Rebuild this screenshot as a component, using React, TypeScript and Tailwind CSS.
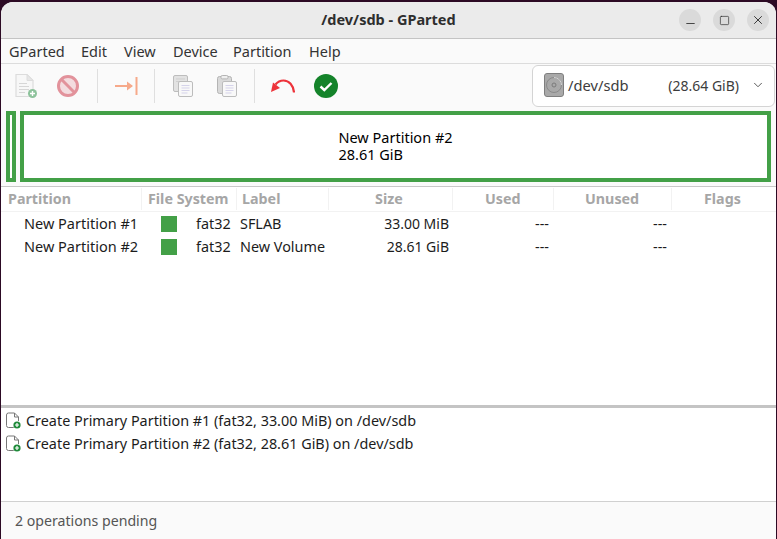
import { ChevronDown, Minus, Square, X } from 'lucide-react';

interface Row {
  name: string;
  label: string;
  size: string;
}

const rows: Row[] = [
  { name: 'New Partition #1', label: 'SFLAB', size: '33.00 MiB' },
  { name: 'New Partition #2', label: 'New Volume', size: '28.61 GiB' },
];

const ops = [
  'Create Primary Partition #1 (fat32, 33.00 MiB) on /dev/sdb',
  'Create Primary Partition #2 (fat32, 28.61 GiB) on /dev/sdb',
];

const menus = [
  { name: 'GParted', w: 'w-[72px]' },
  { name: 'Edit', w: 'w-[43px]' },
  { name: 'View', w: 'w-[49px]' },
  { name: 'Device', w: 'w-[60px]' },
  { name: 'Partition', w: 'w-[76px]' },
  { name: 'Help', w: 'w-[40px]' },
];

function WindowButton({ children }: { children: React.ReactNode }) {
  return (
    <span className="flex h-[22px] w-[22px] items-center justify-center rounded-full bg-[#dadada] text-[#2e2e2e]">
      {children}
    </span>
  );
}

function Divider({ className }: { className: string }) {
  return <span className={`block h-[34px] w-px bg-[#dfdfdf] ${className}`} />;
}

function NewIcon() {
  return (
    <svg width="23" height="26" viewBox="0 0 23 26">
      <path d="M1 1.5h11l6 6v16H1z" fill="#f7f7f7" stroke="#dcdcdc" strokeWidth="1.2" />
      <path d="M12 1.5v6h6z" fill="#e6e6e6" stroke="#dcdcdc" />
      <path d="M4 10.5h8M4 13.5h10M4 16.5h10M4 19.5h6" stroke="#d6d6d6" strokeWidth="1" />
      <circle cx="17.5" cy="20.5" r="4.5" fill="#8dc29b" />
      <path d="M15 20.5h5M17.5 18v5" stroke="#fff" strokeWidth="1.4" />
    </svg>
  );
}

function StopIcon() {
  return (
    <svg width="24" height="24" viewBox="0 0 24 24">
      <circle cx="12" cy="12" r="9.5" fill="#f3dcdf" stroke="#e2929b" strokeWidth="3" />
      <path d="M5.8 5.8l12.4 12.4" stroke="#e2929b" strokeWidth="3" />
    </svg>
  );
}

function ForwardIcon() {
  return (
    <svg width="23" height="20" viewBox="0 0 23 20">
      <path d="M0 10h17" stroke="#f6a98a" strokeWidth="2" />
      <path d="M12 5.5l6 4.5-6 4.5z" fill="#f6a98a" />
      <path d="M21.5 1v18" stroke="#f6a98a" strokeWidth="2" />
    </svg>
  );
}

function CopyIcon() {
  return (
    <svg width="20" height="22" viewBox="0 0 20 22">
      <rect x="0.5" y="0.5" width="14" height="16" rx="1.5" fill="#e2e2e2" stroke="#bdbdbd" />
      <path d="M3 4h9M3 6.5h9" stroke="#cfcfcf" />
      <rect x="5.5" y="6.5" width="14" height="15" rx="1.5" fill="#f8f8f8" stroke="#bcbcbc" />
      <path d="M8.5 10.5h8M8.5 13h8M8.5 15.5h8M8.5 18h6" stroke="#d5d3ea" />
    </svg>
  );
}

function PasteIcon() {
  return (
    <svg width="20" height="22" viewBox="0 0 20 22">
      <rect x="0.5" y="1.5" width="14" height="17" rx="2" fill="#d9d9d9" stroke="#b4b4b4" />
      <rect x="4" y="0.5" width="7" height="3.4" rx="1.2" fill="#efefef" stroke="#b4b4b4" />
      <rect x="5.5" y="6.5" width="14" height="15" rx="1.5" fill="#f8f8f8" stroke="#bcbcbc" />
      <path d="M8.5 10.5h8M8.5 13h8M8.5 15.5h8M8.5 18h6" stroke="#d5d3ea" />
    </svg>
  );
}

function UndoIcon() {
  return (
    <svg width="24" height="14" viewBox="0 0 24 14">
      <path d="M23 13.5C22.4 6 18 1.5 12.5 1.5 9 1.5 6.5 3 4.5 5.5" fill="none" stroke="#ed333b" strokeWidth="2.2" />
      <path d="M0 13l2-9.5 7 5.5z" fill="#ed333b" />
    </svg>
  );
}

function ApplyIcon() {
  return (
    <svg width="24" height="24" viewBox="0 0 24 24">
      <circle cx="12" cy="12" r="12" fill="#14832a" />
      <path d="M6.5 12.5l3.8 3.5 7.2-7" fill="none" stroke="#fff" strokeWidth="2.4" />
    </svg>
  );
}

function DiskIcon() {
  return (
    <svg width="20" height="24" viewBox="0 0 20 24">
      <rect x="0.5" y="0.5" width="19" height="23" rx="2.5" fill="#a9a9a9" stroke="#7f7f7f" />
      <circle cx="10" cy="12" r="7.5" fill="none" stroke="#8a8a8a" />
      <path d="M10 4.5a7.5 7.5 0 0 1 7.5 7.5" fill="none" stroke="#d6d6d6" />
      <circle cx="10" cy="12" r="2" fill="none" stroke="#7b7b7b" />
    </svg>
  );
}

function OpIcon() {
  return (
    <svg width="17" height="18" viewBox="0 0 17 18">
      <path d="M1.5 3a2 2 0 0 1 2-2h6l4 4v10.5h-10a2 2 0 0 1-2-2z" fill="#fff" stroke="#777" />
      <path d="M9.5 1v4h4" fill="none" stroke="#777" />
      <circle cx="12" cy="13" r="4.2" fill="#fff" />
      <circle cx="12" cy="13" r="3.6" fill="#1f8a3a" />
      <path d="M10 13h4M12 11v4" stroke="#fff" strokeWidth="1.2" />
    </svg>
  );
}

export default function App() {
  return (
    <div className="h-[539px] w-[777px] overflow-hidden bg-[#2c0a24] pt-[2px] pl-px font-['Noto_Sans',sans-serif] text-[14.4px] text-[#1c1c1c]">
      <div className="flex h-[537px] w-[775px] flex-col overflow-hidden rounded-t-[12px] bg-white">
        {/* Title bar */}
        <div className="relative flex h-[37px] shrink-0 items-center justify-end gap-[12px] border-b border-[#c4c4c4] bg-[#ebebeb] pr-[7px]">
          <span className="absolute inset-x-0 text-center text-[14.5px] font-bold text-[#2e2e2e]">/dev/sdb - GParted</span>
          <WindowButton>
            <Minus size={13} strokeWidth={1.6} className="translate-y-[3px]" />
          </WindowButton>
          <WindowButton>
            <Square size={11} strokeWidth={1.5} />
          </WindowButton>
          <WindowButton>
            <X size={14} strokeWidth={1.6} />
          </WindowButton>
        </div>

        {/* Menu */}
        <div className="flex h-[25px] shrink-0 items-center border-b border-[#dcdcdc] bg-[#fafafa] pt-px pl-[8px] text-[14.5px] text-[#333]">
          {menus.map((menu) => (
            <span key={menu.name} className={menu.w}>
              {menu.name}
            </span>
          ))}
        </div>

        {/* Toolbar */}
        <div className="flex h-[43px] shrink-0 items-center bg-[#fafafa]">
          <span className="ml-[14px] flex">
            <NewIcon />
          </span>
          <span className="ml-[18px] flex">
            <StopIcon />
          </span>
          <Divider className="ml-[17px]" />
          <span className="ml-[17px] flex">
            <ForwardIcon />
          </span>
          <Divider className="ml-[16px]" />
          <span className="ml-[18px] flex">
            <CopyIcon />
          </span>
          <span className="ml-[24px] flex">
            <PasteIcon />
          </span>
          <Divider className="ml-[17px]" />
          <span className="ml-[16px] flex">
            <UndoIcon />
          </span>
          <span className="ml-[19px] flex">
            <ApplyIcon />
          </span>
          <div className="mr-px ml-auto flex h-[42px] w-[243px] items-center rounded-[6px] border border-[#d4d4d4] bg-white pr-[9px] pb-px pl-[11px] text-[#3d3d3d]">
            <DiskIcon />
            <span className="ml-[4px] text-[14.7px]">/dev/sdb</span>
            <span className="ml-auto text-[14px]">(28.64 GiB)</span>
            <ChevronDown size={14} strokeWidth={1.5} className="ml-[12px] text-[#444]" />
          </div>
        </div>

        {/* Graph */}
        <div className="flex h-[80px] shrink-0 gap-[4px] border-b border-[#c8c8c8] bg-[#fafafa] px-[5px] pt-[4px]">
          <div className="h-[71px] w-[10px] shrink-0 border-[4px] border-[#43a047] bg-white" />
          <div className="flex h-[71px] flex-1 flex-col items-center justify-center border-[4px] border-[#43a047] bg-white">
            <div className="-translate-y-px text-[14.5px] leading-[17px] text-black">
              <div>New Partition #2</div>
              <div>28.61 GiB</div>
            </div>
          </div>
        </div>

        {/* Partition table */}
        <div className="flex h-[25px] shrink-0 items-center border-b border-[#f2f2f2] text-[14.3px] font-bold text-[#a6a6a6]">
          <span className="w-[141px] border-r border-[#f2f2f2] pl-[7px]">Partition</span>
          <span className="w-[95px] border-r border-[#f2f2f2] pl-[6px]">File System</span>
          <span className="w-[92px] border-r border-[#f2f2f2] pl-[5px]">Label</span>
          <span className="w-[124px] border-r border-[#f2f2f2] pl-[46px]">Size</span>
          <span className="w-[101px] border-r border-[#f2f2f2] pl-[32px]">Used</span>
          <span className="w-[118px] border-r border-[#f2f2f2] pl-[31px]">Unused</span>
          <span className="pl-[32px]">Flags</span>
        </div>
        <div className="h-[193px] shrink-0">
          {rows.map((row) => (
            <div key={row.name} className="flex h-[23px] items-center">
              <span className="w-[160px] pl-[23px] text-[14.5px]">{row.name}</span>
              <span className="h-[16px] w-[16px] bg-[#43a047]" />
              <span className="ml-[19px] w-[44px]">fat32</span>
              <span className="w-[100px]">{row.label}</span>
              <span className="w-[109px] text-right text-[14px]">{row.size}</span>
              <span className="w-[100px] text-right">---</span>
              <span className="w-[118px] text-right">---</span>
            </div>
          ))}
        </div>

        {/* Operations */}
        <div className="h-[3px] shrink-0 bg-[#c4c4c4]" />
        <div className="h-[94px] shrink-0 border-b border-[#d0d0d0] pt-px">
          {ops.map((op) => (
            <div key={op} className="flex h-[23px] items-center pl-[4px]">
              <OpIcon />
              <span className="ml-[4px]">{op}</span>
            </div>
          ))}
        </div>

        {/* Status bar */}
        <div className="flex flex-1 items-center bg-[#fafafa] pl-[14px] text-[14.15px] text-[#555]">2 operations pending</div>
      </div>
    </div>
  );
}
